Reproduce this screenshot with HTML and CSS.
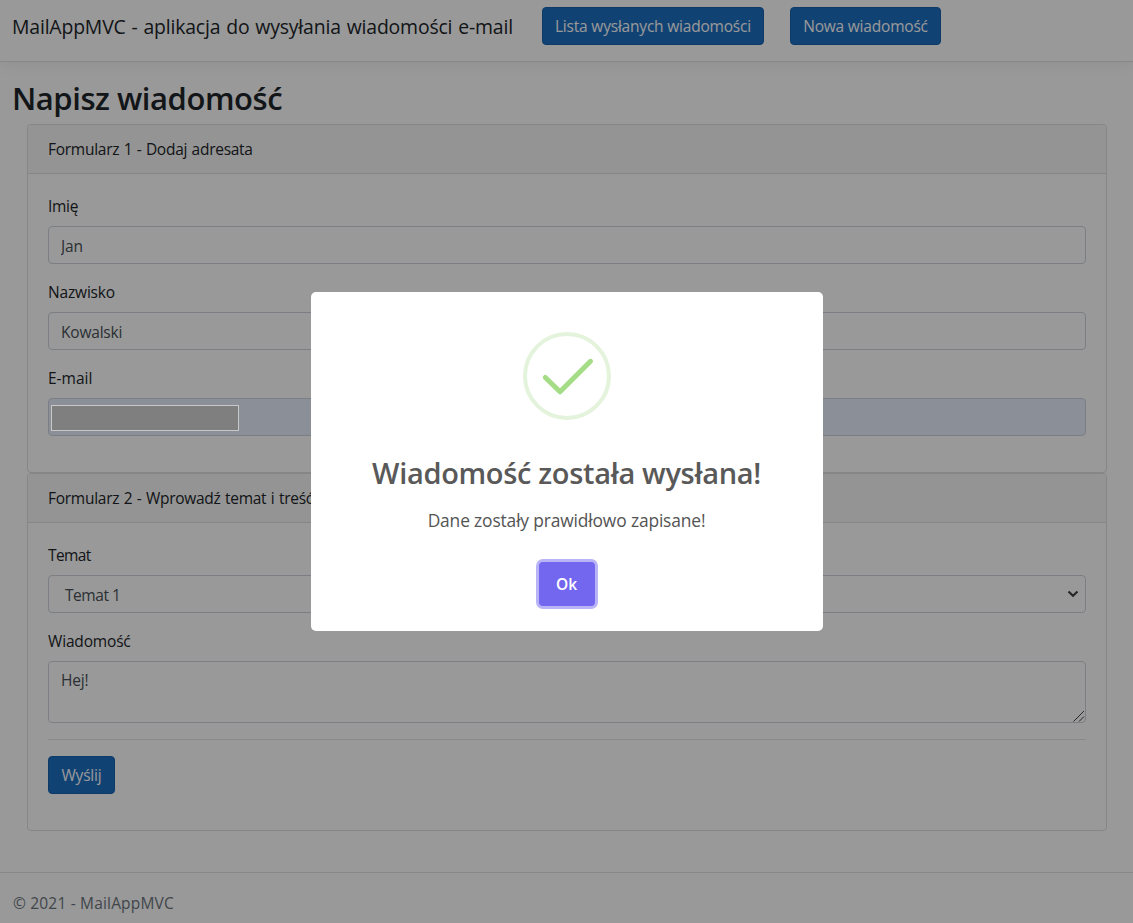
FILE: index.html
```
<!DOCTYPE html>
<html lang="pl">
<head>
  <meta charset="utf-8">
  <title>Napisz wiadomość - MailAppMVC</title>
  <link rel="stylesheet" href="styles.css">
</head>
<body>
  <header class="navbar">
    <a class="brand">MailAppMVC - aplikacja do wysyłania wiadomości e-mail</a>
    <a class="btn btn-list">Lista wysłanych wiadomości</a>
    <a class="btn btn-new">Nowa wiadomość</a>
  </header>

  <main class="content">
    <h1 class="page-title">Napisz wiadomość</h1>
    <form class="forms">
      <section class="card">
        <div class="card-header">Formularz 1 - Dodaj adresata</div>
        <div class="card-body">
          <div class="group">
            <label class="label tight">Imię</label>
            <input class="control" value="Jan">
          </div>
          <div class="group">
            <label class="label">Nazwisko</label>
            <input class="control" value="Kowalski">
          </div>
          <div class="group">
            <label class="label email-label">E-mail</label>
            <div class="control autofilled"><span class="redacted"></span></div>
          </div>
        </div>
      </section>

      <section class="card">
        <div class="card-header">Formularz 2 - Wprowadź temat i treść wiadomości</div>
        <div class="card-body">
          <div class="group">
            <label class="label topic">Temat</label>
            <div class="control select">
              <span class="topic-value">Temat 1</span>
              <svg class="chevron" width="12" height="8" viewBox="0 0 12 8"><path d="M1.500 1.500 6 5.800l4.500-4.300" fill="none" stroke="#404040" stroke-width="2.200"/></svg>
            </div>
          </div>
          <div class="group">
            <label class="label">Wiadomość</label>
            <div class="message-wrap">
              <textarea class="control message">Hej!</textarea>
              <svg class="grip" width="12" height="12" viewBox="0 0 12 12"><path d="M.5 11.500 11 1M6 11.500l5-5" fill="none" stroke="#444"/></svg>
            </div>
          </div>
          <hr class="rule">
          <button class="btn btn-send" type="button">Wyślij</button>
        </div>
      </section>
    </form>
  </main>

  <footer class="footer">© 2021 - MailAppMVC</footer>

  <div class="overlay">
    <div class="modal" role="dialog">
      <svg class="success" width="88" height="88" viewBox="0 0 88 88">
        <circle cx="44" cy="44" r="42" fill="none" stroke="#e4f3db" stroke-width="4"/>
        <path d="M22.300 45.500 37 59.800 67.500 29.300" fill="none" stroke="#a5dc86" stroke-width="5" stroke-linecap="round" stroke-linejoin="round"/>
      </svg>
      <h2 class="modal-title">Wiadomość została wysłana!</h2>
      <p class="modal-text">Dane zostały prawidłowo zapisane!</p>
      <button class="modal-ok" type="button">Ok</button>
    </div>
  </div>
</body>
</html>
```
FILE: styles.css
```
* { box-sizing: border-box; }

body {
  margin: 0;
  height: 923px;
  overflow: hidden;
  display: flex;
  flex-direction: column;
  background: #fff;
  color: #212529;
  font: 15.5px/24px "Open Sans", sans-serif;
  letter-spacing: -0.17px;
}

.navbar {
  display: flex;
  align-items: flex-start;
  height: 62px;
  padding: 7px 12px 0;
  border-bottom: 1px solid #dee2e6;
  box-shadow: 0 4px 12px rgba(0, 0, 0, .05);
}
.brand {
  width: 530px;
  padding-top: 5px;
  font-size: 19.4px;
  line-height: 30px;
  letter-spacing: -0.16px;
  word-spacing: 1px;
  white-space: nowrap;
}

.btn {
  height: 38px;
  padding: 6px 0;
  border: 1px solid #1861ac;
  border-radius: 4px;
  background: #1b6ec2;
  color: #fff;
  font: inherit;
  letter-spacing: -0.2px;
  text-align: center;
  white-space: nowrap;
}
.btn-list { width: 222px; }
.btn-new { width: 151px; margin-left: 26px; }
.btn-send { display: block; width: 67px; }

.content { padding: 17px 12px 0; }
.page-title {
  margin: 0 0 7px;
  font-size: 31px;
  font-weight: 600;
  line-height: 38px;
  letter-spacing: -0.45px;
}

.forms { padding: 0 14px 0 15px; }
.card {
  border: 1px solid #dfdfdf;
  border-radius: 4px;
  overflow: clip;
}
.card-header {
  height: 49px;
  padding: 12px 20px;
  border-bottom: 1px solid #dfdfdf;
  background: #f7f7f7;
  letter-spacing: -0.27px;
  word-spacing: .7px;
}
.card-body { padding: 20px 20px 36px; }
.card:first-child .card-body { padding-bottom: 20px; }

.group { margin-bottom: 16px; }
.label { display: block; margin-bottom: 8px; }
.tight { letter-spacing: -0.3px; }
.email-label { letter-spacing: 0; }
.topic { letter-spacing: -0.6px; }

.control {
  display: block;
  width: 100%;
  height: 38px;
  padding: 7px 12px 5px;
  border: 1px solid #ced4da;
  border-radius: 4px;
  background: #fff;
  color: #495057;
  font: inherit;
  letter-spacing: -0.2px;
}
.autofilled { padding: 6px 2px; background: #e8f0fe; }
/* The redaction block is drawn above the page backdrop. */
.redacted {
  display: block;
  position: relative;
  z-index: 20;
  width: 188px;
  height: 26px;
  border: 1px solid #c8c8c8;
  background: #7f7f7f;
}
.select {
  display: flex;
  align-items: center;
  justify-content: space-between;
  padding: 2px 6px 0 16px;
}
.topic-value { letter-spacing: -0.45px; }
.chevron { margin-bottom: 2px; }
.message-wrap { display: grid; }
.message { grid-area: 1 / 1; height: 62px; padding: 6px 12px; resize: none; }
.grip { grid-area: 1 / 1; place-self: end; margin: 0 1px 1px 0; pointer-events: none; }
.rule { margin: 16px 0; border: 0; border-top: 1px solid #e5e5e5; }

.footer {
  margin-top: auto;
  height: 51px;
  padding: 18px 13px 0;
  border-top: 1px solid #dee2e6;
  color: #6c757d;
  letter-spacing: 0.18px;
}

.overlay {
  position: fixed;
  inset: 0;
  z-index: 10;
  display: flex;
  align-items: center;
  justify-content: center;
  background: rgba(0, 0, 0, .4);
}
.modal {
  display: flex;
  flex-direction: column;
  align-items: center;
  width: 512px;
  height: 339px;
  padding-top: 40px;
  border-radius: 5px;
  background: #fff;
}
.modal-title {
  margin: 31px 0 0;
  color: #595959;
  font-size: 29px;
  font-weight: 600;
  line-height: 44px;
  letter-spacing: -0.33px;
}
.modal-text {
  margin: 12px 0 0;
  color: #545454;
  font-size: 17.4px;
  line-height: 26px;
  letter-spacing: -0.15px;
}
.modal-ok {
  width: 56px;
  height: 44px;
  margin-top: 29px;
  padding: 0;
  border: 0;
  border-radius: 4px;
  background: #7367f0;
  box-shadow: 0 0 0 3px rgba(115, 103, 240, .5);
  color: #fff;
  font: 600 15.5px/44px "Open Sans", sans-serif;
}
```
